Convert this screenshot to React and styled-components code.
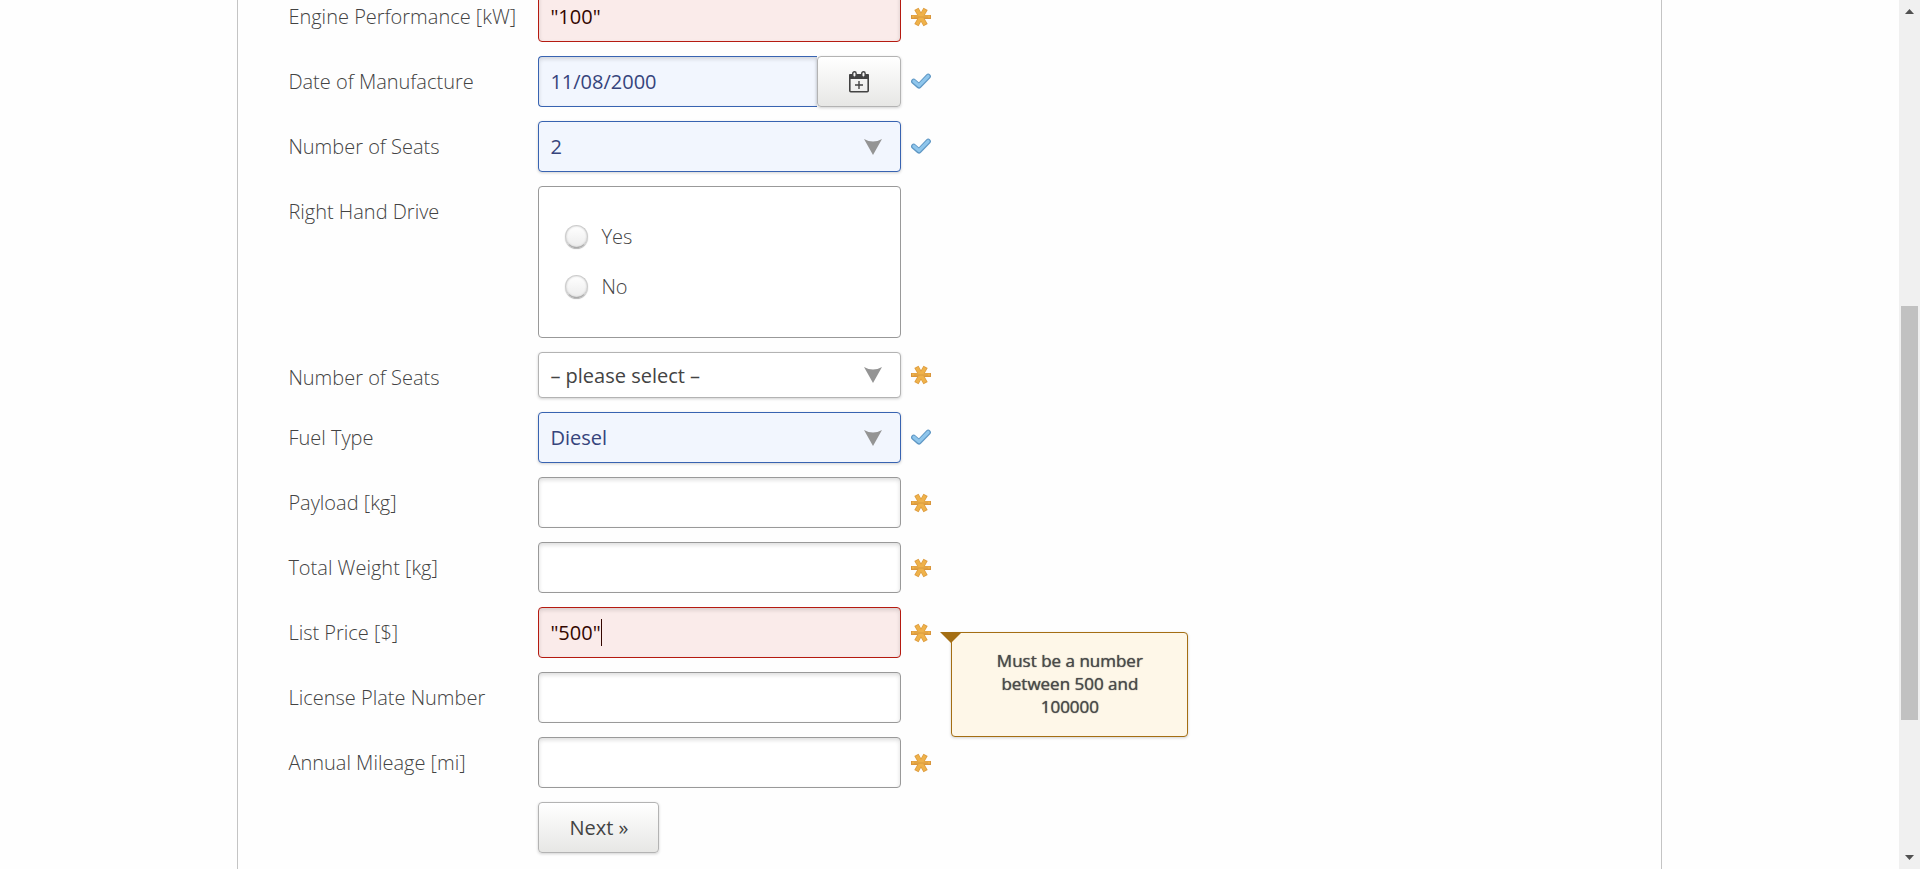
import React from "react";
import styled, { createGlobalStyle, css } from "styled-components";

const GlobalStyle = createGlobalStyle`
  *, *::before, *::after { box-sizing: border-box; }
  body {
    margin: 0;
    background: #fefefe;
    color: #434343;
    font-family: "Open Sans", "Noto Sans", sans-serif;
    font-size: 20px;
    line-height: 27px;
  }
`;

const tones = {
  plain: { border: "#999999", fill: "#ffffff", text: "#434343" },
  valid: { border: "#3863b1", fill: "#f2f6fe", text: "#36447c" },
  invalid: { border: "#b51a10", fill: "#faebea", text: "#330600" },
};

const Page = styled.div`
  display: flex;
  min-height: 100vh;
  overflow: hidden;
`;

const Content = styled.main`
  flex: 1;
  display: flex;
  justify-content: center;
`;

const Panel = styled.section`
  width: 75%;
  margin-top: -9px;
  padding: 0 50px 16px;
  border: solid #c4c4c4;
  border-width: 0 1px;
`;

const Form = styled.form`
  display: flex;
  flex-direction: column;
  gap: 14px;
`;

const RowShell = styled.div`
  display: grid;
  grid-template-columns: 250px 363px 30px 237px;
  align-items: start;
`;

const RowLabel = styled.label`
  padding-top: 12px;
  font-weight: 300;
`;

const StatusCell = styled.div`
  align-self: center;
  display: flex;
  padding-left: 10px;

  > svg { flex: none; }
`;

const box = css`
  width: 100%;
  height: 51px;
  padding: 0 11px;
  border: 1px solid ${(p) => tones[p.$tone || "plain"].border};
  border-radius: 4px;
  background: ${(p) => tones[p.$tone || "plain"].fill};
  color: ${(p) => tones[p.$tone || "plain"].text};
  font: inherit;
  outline: none;
`;

const TextInput = styled.input`
  ${box}
  box-shadow: inset 0 2px 4px rgba(0, 0, 0, 0.14);
`;

const ActiveBox = styled.div`
  ${box}
  display: flex;
  align-items: center;
  box-shadow: inset 0 2px 4px rgba(0, 0, 0, 0.14);
`;

const ActiveInput = styled.input`
  field-sizing: content;
  padding: 0;
  border: 0;
  background: none;
  color: inherit;
  font: inherit;
  outline: none;
  caret-color: transparent;
`;

const Caret = styled.span`
  width: 1px;
  height: 27px;
  background: #330600;
`;

const DateGroup = styled.div`
  display: grid;
  grid-template-columns: 1fr 84px;
`;

const DateInput = styled(TextInput)`
  border-right: 0;
  border-radius: 4px 0 0 4px;
`;

const Button = styled.button`
  display: flex;
  align-items: center;
  justify-content: center;
  height: 51px;
  padding: 0 30px;
  border: 1px solid #b3b3b3;
  border-radius: 4px;
  background: linear-gradient(#ffffff, #e7e7e5);
  box-shadow: 0 1px 3px rgba(0, 0, 0, 0.18);
  color: #434343;
  font: inherit;

  > svg { flex: none; }
`;

const SelectShell = styled.div`
  display: grid;
  align-items: center;

  > * { grid-area: 1 / 1; }
  > svg {
    justify-self: end;
    margin-right: 19px;
    pointer-events: none;
  }
`;

const Select = styled.select`
  ${box}
  height: ${(p) => (p.$compact ? 46 : 51)}px;
  border-color: ${(p) => (p.$tone ? tones[p.$tone].border : "#b3b3b3")};
  box-shadow: 0 1px 3px rgba(0, 0, 0, 0.18);
  appearance: none;
`;

const RadioGroup = styled.div`
  display: flex;
  flex-direction: column;
  gap: 23px;
  padding: 36px 26px 37px;
  border: 1px solid #999999;
  border-radius: 4px;
  background: #ffffff;
`;

const RadioOption = styled.label`
  display: flex;
  align-items: center;
  gap: 13px;
  font-weight: 300;
`;

const Radio = styled.input`
  appearance: none;
  width: 23px;
  height: 23px;
  margin: 0;
  border: 1px solid #cccccc;
  border-bottom-color: #aaaaaa;
  border-radius: 50%;
  background: linear-gradient(#ffffff, #ececec);
  box-shadow: inset 0 0 2px #c4c4c4, 0 1px 1px #b4b4b4;
`;

const Actions = styled.div`
  display: flex;
  padding-left: 250px;
`;

const TipAnchor = styled.div`
  position: relative;
  align-self: start;
`;

const Tip = styled.div`
  position: absolute;
  top: 25px;
  left: 20px;
  width: 237px;
  padding: 16px 30px 18px;
  border: 1px solid #a46e13;
  border-radius: 4px;
  background: #fef7e8;
  box-shadow: 0 1px 3px rgba(0, 0, 0, 0.18);
  color: #4a4a4a;
  font-size: 17px;
  font-weight: 500;
  line-height: 23px;
  text-align: center;
  text-shadow: 0 0 1px #4a4a4a;

  &::before {
    content: "";
    position: absolute;
    top: -1px;
    left: -12px;
    border: solid transparent;
    border-width: 11px 11px 0;
    border-top-color: #a46e13;
  }
`;

const ScrollBar = styled.div`
  display: flex;
  flex-direction: column;
  align-items: center;
  width: 21px;
  height: 100vh;
  padding: 9px 0;
  background: #f0f0f0;
`;

const TrackSpace = styled.div`
  flex: ${(p) => p.$share};
`;

const Thumb = styled.div`
  flex: ${(p) => p.$share};
  width: 17px;
  background: #c1c1c1;
`;

function Required() {
  return (
    <svg width="20" height="20" viewBox="0 0 20 20" role="img" aria-label="required">
      <path d="M0 10H20" stroke="#d9963c" strokeWidth="4" />
      <path d="M5.4 1.8L14.6 18.2M14.6 1.8L5.4 18.2" stroke="#dd9c40" strokeWidth="4.8" />
      <path d="M1 9.6H19" stroke="#efb24a" strokeWidth="2.2" />
      <path d="M5.9 2.6L14.1 17.4M14.1 2.6L5.9 17.4" stroke="#efb24a" strokeWidth="3.2" />
      <path d="M3 10H17" stroke="#d89a3f" strokeWidth="1" />
    </svg>
  );
}

function Valid() {
  return (
    <svg width="20" height="18" viewBox="0 0 20 18" role="img" aria-label="valid" fill="none">
      <path d="M2.8 8.4L8 13L17.2 3.4" stroke="#5f97c4" strokeWidth="5.4" strokeLinecap="round" strokeLinejoin="round" />
      <path d="M2.9 8.2L8 12.6L17.1 3.3" stroke="#8fc6ec" strokeWidth="3.2" strokeLinecap="round" strokeLinejoin="round" />
    </svg>
  );
}

function Arrow() {
  return (
    <svg width="18" height="16" viewBox="0 0 18 16" aria-hidden="true">
      <path d="M0 0Q9 5 18 0L9 16Z" fill="#949494" />
    </svg>
  );
}

function CalendarIcon() {
  return (
    <svg width="20" height="22" viewBox="0 0 20 22" fill="none" stroke="#434343" aria-hidden="true">
      <rect x="0.8" y="4" width="18.4" height="16.8" rx="1" strokeWidth="1.6" />
      <path d="M0 4Q0 3 1 3H19Q20 3 20 4V8H0Z" fill="#434343" stroke="none" />
      <rect x="3.75" y="0.75" width="3.4" height="5.4" rx="1.7" fill="#f7f7f7" strokeWidth="1.4" />
      <rect x="12.75" y="0.75" width="3.4" height="5.4" rx="1.7" fill="#f7f7f7" strokeWidth="1.4" />
      <path d="M10 10V18M6 14H14" strokeWidth="1.4" />
    </svg>
  );
}

function Row({ id, label, status, tip, children }) {
  return (
    <RowShell>
      <RowLabel htmlFor={id}>{label}</RowLabel>
      {children}
      <StatusCell>
        {status === "required" && <Required />}
        {status === "valid" && <Valid />}
      </StatusCell>
      {tip && <TipAnchor><Tip role="alert">{tip}</Tip></TipAnchor>}
    </RowShell>
  );
}

function SelectField({ id, value, tone, compact }) {
  return (
    <SelectShell>
      <Select id={id} $tone={tone} $compact={compact} defaultValue={value}>
        <option>{value}</option>
      </Select>
      <Arrow />
    </SelectShell>
  );
}

export default function App() {
  return (
    <>
      <GlobalStyle />
      <Page>
        <Content>
          <Panel>
            <Form onSubmit={(e) => e.preventDefault()}>
              <Row id="power" label="Engine Performance [kW]" status="required">
                <TextInput id="power" $tone="invalid" defaultValue={'"100"'} />
              </Row>
              <Row id="made" label="Date of Manufacture" status="valid">
                <DateGroup>
                  <DateInput id="made" $tone="valid" defaultValue="11/08/2000" />
                  <Button type="button" aria-label="Open calendar"><CalendarIcon /></Button>
                </DateGroup>
              </Row>
              <Row id="seats" label="Number of Seats" status="valid">
                <SelectField id="seats" value="2" tone="valid" />
              </Row>
              <Row id="rhd-yes" label="Right Hand Drive">
                <RadioGroup>
                  <RadioOption><Radio type="radio" name="rhd" id="rhd-yes" />Yes</RadioOption>
                  <RadioOption><Radio type="radio" name="rhd" />No</RadioOption>
                </RadioGroup>
              </Row>
              <Row id="seats-more" label="Number of Seats" status="required">
                <SelectField id="seats-more" value="– please select –" compact />
              </Row>
              <Row id="fuel" label="Fuel Type" status="valid">
                <SelectField id="fuel" value="Diesel" tone="valid" />
              </Row>
              <Row id="payload" label="Payload [kg]" status="required">
                <TextInput id="payload" />
              </Row>
              <Row id="weight" label="Total Weight [kg]" status="required">
                <TextInput id="weight" />
              </Row>
              <Row id="price" label="List Price [$]" status="required" tip="Must be a number between 500 and 100000">
                <ActiveBox $tone="invalid">
                  <ActiveInput id="price" defaultValue={'"500"'} />
                  <Caret />
                </ActiveBox>
              </Row>
              <Row id="plate" label="License Plate Number">
                <TextInput id="plate" />
              </Row>
              <Row id="mileage" label="Annual Mileage [mi]" status="required">
                <TextInput id="mileage" />
              </Row>
              <Actions>
                <Button type="submit">Next »</Button>
              </Actions>
            </Form>
          </Panel>
        </Content>
        <ScrollBar aria-hidden="true">
          <svg width="9" height="5" viewBox="0 0 9 5"><path d="M0 5L4.5 0L9 5Z" fill="#505050" /></svg>
          <TrackSpace $share={292} />
          <Thumb $share={414} />
          <TrackSpace $share={135} />
          <svg width="9" height="5" viewBox="0 0 9 5"><path d="M0 0L4.5 5L9 0Z" fill="#505050" /></svg>
        </ScrollBar>
      </Page>
    </>
  );
}
